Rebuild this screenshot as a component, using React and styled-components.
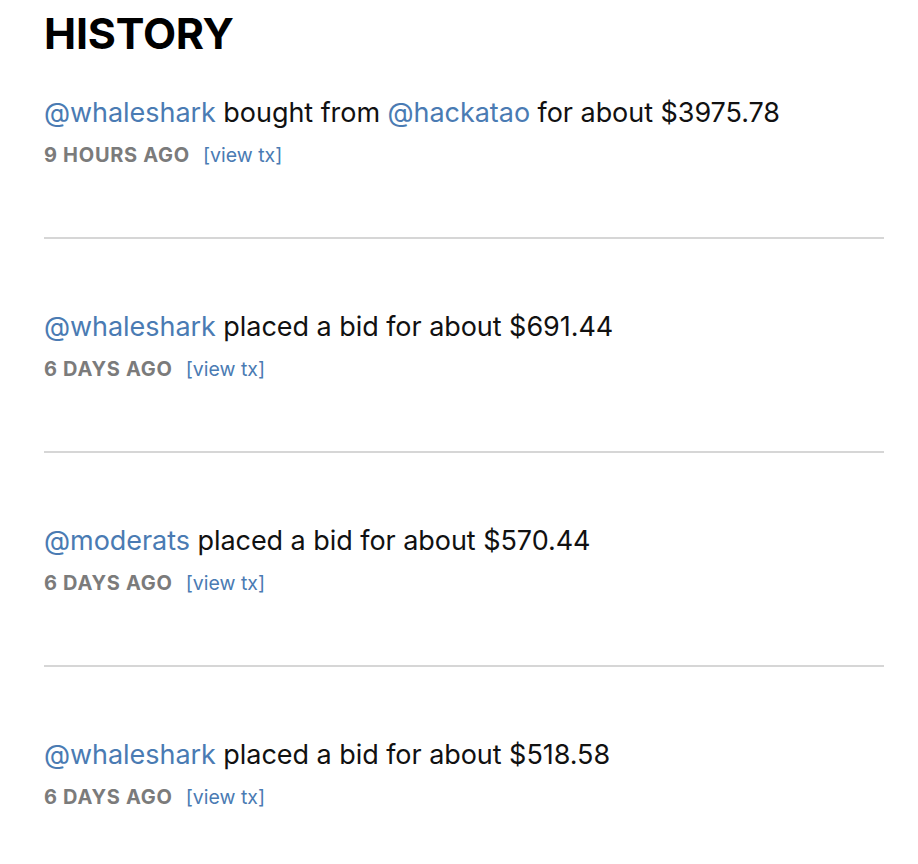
import { createGlobalStyle, styled } from "styled-components";

const Global = createGlobalStyle`
  html, body {
    margin: 0;
    padding: 0;
    background: #fff;
  }
  body {
    font-family: "Inter", "Liberation Sans", Arial, sans-serif;
    color: #111;
  }
`;

const Page = styled.div`
  padding: 8px 34px 0 44px;
`;

const Title = styled.h2`
  margin: 0;
  font-size: 43px;
  line-height: 50px;
  font-weight: 700;
  letter-spacing: -0.2px;
  color: #000;
`;

const List = styled.ul`
  list-style: none;
  margin: 37px 0 0;
  padding: 0;
`;

const Item = styled.li`
  padding: ${(p) => (p.first ? "1px" : "71px")} 0 ${(p) => (p.last ? "20px" : "70px")};
  border-bottom: ${(p) => (p.last ? "none" : "2px solid #d6d6d6")};
`;

const Line = styled.div`
  font-size: 27px;
  line-height: 34px;
  color: #111;
  letter-spacing: -0.05px;
`;

const User = styled.a`
  color: #4a7bb3;
  text-decoration: none;
`;

const Meta = styled.div`
  margin-top: 13px;
  display: flex;
  align-items: baseline;
  gap: 13px;
  line-height: 24px;
`;

const When = styled.span`
  font-size: 20px;
  font-weight: 700;
  color: #7b7b7b;
  letter-spacing: 0.7px;
`;

const Tx = styled.a`
  font-size: 19.5px;
  color: #4a7bb3;
  text-decoration: none;
`;

const events = [
  { from: "@whaleshark", to: "@hackatao", kind: "bought", amount: "$3975.78", when: "9 HOURS AGO" },
  { from: "@whaleshark", kind: "bid", amount: "$691.44", when: "6 DAYS AGO" },
  { from: "@moderats", kind: "bid", amount: "$570.44", when: "6 DAYS AGO" },
  { from: "@whaleshark", kind: "bid", amount: "$518.58", when: "6 DAYS AGO" },
];

export default function App() {
  return (
    <Page>
      <Global />
      <Title>HISTORY</Title>
      <List>
        {events.map((ev, i) => (
          <Item key={i} first={i === 0} last={i === events.length - 1}>
            <Line>
              <User href="#">{ev.from}</User>
              {ev.kind === "bought" ? (
                <>
                  {" bought from "}
                  <User href="#">{ev.to}</User>
                  {` for about ${ev.amount}`}
                </>
              ) : (
                ` placed a bid for about ${ev.amount}`
              )}
            </Line>
            <Meta>
              <When>{ev.when}</When>
              <Tx href="#">[view tx]</Tx>
            </Meta>
          </Item>
        ))}
      </List>
    </Page>
  );
}
